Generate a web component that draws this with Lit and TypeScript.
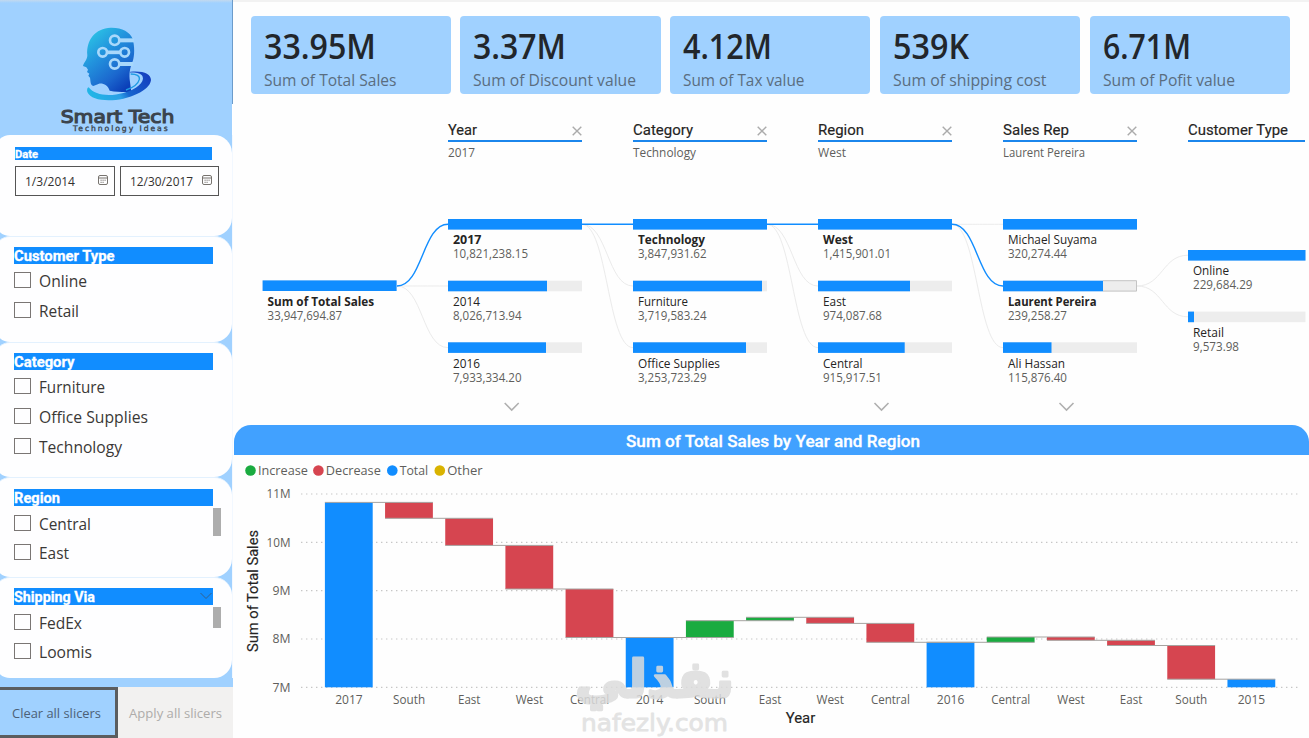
import { LitElement, html, svg, css, nothing } from "lit";
import { customElement } from "lit/decorators.js";

/* Text run with a fixed advance width; the baseline sits 15px below the box top. */
const label = (text: string, width: number, cls: string) => html`
  <svg class="label" width=${width} height="20"><text class=${cls} x="0" y="15" textLength=${width} lengthAdjust="spacingAndGlyphs">${text}</text></svg>`;

const run = (text: string, x: number, y: number, width: number, cls: string) =>
  svg`<text class=${cls} x=${x} y=${y} textLength=${width} lengthAdjust="spacingAndGlyphs">${text}</text>`;

const textStyles = css`
  text { font-family: "Open Sans", "Noto Sans", sans-serif; fill: #252423; }
  .label { display: block; overflow: visible; flex: none; }
  .din { font-family: Roboto, sans-serif; }
`;

@customElement("brand-logo")
class BrandLogo extends LitElement {
  static styles = [textStyles, css`
    :host { display: block; height: 135px; }
    svg { display: block; }
    .name { font-family: "DejaVu Sans", sans-serif; font-weight: 400; font-size: 55px; fill: #3b444d; stroke: #3b444d; stroke-width: 3.5px; }
    .tag { font-family: "DejaVu Sans", sans-serif; font-weight: 400; font-size: 23px; fill: #3b444d; stroke: #3b444d; stroke-width: 1px; }
  `];
  render() {
    return html`<svg width="232" height="135" viewBox="0 0 696 405">
      <defs>
        <linearGradient id="head" x1="0.1" y1="0.05" x2="0.75" y2="1">
          <stop offset="0" stop-color="#2cc8e6"/><stop offset="0.4" stop-color="#2292dd"/>
          <stop offset="0.75" stop-color="#1b67ce"/><stop offset="1" stop-color="#0b3fb8"/>
        </linearGradient>
        <linearGradient id="ring" x1="0" y1="0.6" x2="1" y2="0.3">
          <stop offset="0" stop-color="#22b5e6"/><stop offset="0.4" stop-color="#2a9fe6"/>
          <stop offset="0.55" stop-color="#1765cf"/><stop offset="1" stop-color="#143fbf"/>
        </linearGradient>
      </defs>
      <path fill="url(#head)" d="M332 83C365 82 390 96 398 116C404 140 404 165 398 184C390 204 386 222 390 246L394 276C372 277 350 276 329 272C324 256 310 249 297 251L280 258C270 254 272 242 270 233L265 227L268 221L261 216L264 209L259 202L249 198C250 190 262 180 262 166C258 120 286 85 332 83Z"/>
      <g fill="none" stroke="#a8d8fb" stroke-width="8">
        <circle cx="344" cy="121" r="14"/><path d="M358 121H402" stroke-width="12"/>
        <circle cx="308" cy="157" r="13"/><circle cx="374" cy="157" r="13"/><path d="M321 157H361" stroke-width="11"/>
        <circle cx="344" cy="192" r="14"/><path d="M358 192H400" stroke-width="12"/>
      </g>
      <path fill="url(#ring)" d="M266 262C284 287 330 290 370 279C410 268 434 246 428 230C424 220 408 217 390 218L391 215C430 211 453 222 453 240C450 266 412 286 370 296C325 305 273 302 262 276C260 269 262 262 266 262Z"/>
      <path fill="none" stroke="#1e9be3" stroke-width="4" d="M392 222C410 222 420 228 418 238C414 254 396 264 378 270"/>
      <text class="name" x="182" y="369" textLength="341" lengthAdjust="spacingAndGlyphs">Smart Tech</text>
      <text class="tag" x="219" y="394" textLength="284">Technology Ideas</text>
    </svg>`;
  }
}

type Option = [string, number];

@customElement("slicer-panel")
class SlicerPanel extends LitElement {
  static properties = {
    heading: {}, headingWidth: { type: Number }, options: { attribute: false },
    scroll: { type: Number }, chevron: { type: Boolean }, pitch: { type: Number },
  };
  declare heading: string; declare headingWidth: number; declare options: Option[];
  declare scroll: number; declare chevron: boolean; declare pitch: number;
  static styles = [textStyles, css`
    :host { display: block; box-sizing: border-box; background: #fefeff; border-radius: 15px 18px 18px 15px; margin-left: -5px; padding: 10px 11px 0 19px; border-top: 1px solid #e3f1fe; }
    .strip { width: 199px; height: 17px; background: #118dff; display: flex; justify-content: space-between; }
    .strip .label { margin-top: -1px; }
    .h { font-size: 15px; font-weight: 700; fill: #fff; stroke: #fff; stroke-width: .3px; }
    .chev { margin: 4px 1px 0 0; }
    .body { display: flex; justify-content: space-between; width: 207px; }
    .list { display: flex; flex-direction: column; padding-top: 8px; }
    :host(.tight) .list { padding-top: 9px; }
    :host(.reg) { padding-top: 11px; }
    :host(.reg) .opt .label { margin-top: -.5px; }
    .opt { display: flex; gap: 9px; }
    .box { width: 17px; height: 16px; box-sizing: border-box; border: 1px solid #7a7674; flex: none; }
    .opt .label { margin-left: -1px; }
    .o { font-size: 15.6px; fill: #3a3836; }
    .bar { width: 8px; background: #adadad; margin-top: 2px; }
  `];
  render() {
    return html`
      <div class="strip">${label(this.heading, this.headingWidth, "h din")}
        ${this.chevron ? html`<svg class="chev" width="12" height="8"><path d="M.5 1L6 6.5L11.5 1" fill="none" stroke="#35618c"/></svg>` : nothing}</div>
      <div class="body">
        <div class="list">${this.options.map(([t, w]) => html`
          <div class="opt" style="height:${this.pitch}px"><span class="box"></span>${label(t, w, "o")}</div>`)}</div>
        ${this.scroll ? html`<div class="bar" style="height:${this.scroll}px"></div>` : nothing}
      </div>`;
  }
}

@customElement("date-panel")
class DatePanel extends LitElement {
  static styles = [textStyles, css`
    :host { display: block; box-sizing: border-box; height: 101px; background: #fefeff; border-radius: 15px 18px 18px 15px; margin-left: -5px; padding: 12px 0 0 20px; }
    .strip { display: flex; width: 197px; height: 13px; background: #118dff; }
    .strip .label { margin-top: -4px; }
    .h { font-size: 11px; font-weight: 700; fill: #fff; stroke: #fff; stroke-width: .3px; }
    .fields { display: flex; gap: 5px; margin-top: 6px; }
    .field { box-sizing: border-box; width: 99.5px; height: 30px; border: 1.5px solid #555; display: flex; justify-content: space-between; padding: 4px 5px 0 9px; }
    .d { font-size: 12.3px; fill: #33312f; }
    .cal { margin-top: 4px; margin-right: 1px; }
  `];
  field(t: string, w: number) {
    return html`<div class="field">${label(t, w, "d")}
      <svg class="cal" width="10" height="10" fill="none" stroke="#77736f"><rect x=".5" y=".5" width="9" height="9" rx="1.5"/><path d="M.5 3H9.5"/><path d="M2.5 5.2H8M2.5 7.3H6.5" stroke-dasharray="1.2 .8"/></svg></div>`;
  }
  render() {
    return html`<div class="strip">${label("Date", 23, "h din")}</div>
      <div class="fields">${this.field("1/3/2014", 50)}${this.field("12/30/2017", 63)}</div>`;
  }
}

@customElement("side-bar")
class SideBar extends LitElement {
  static styles = [textStyles, css`
    :host { display: flex; flex-direction: column; width: 233px; height: 738px; background: #a0d1ff; overflow: hidden; flex: none; box-sizing: border-box; }
    .top { background: linear-gradient(#c2d9ef, #a0d1ff 3px); border-right: 1px solid #6c9ccb; height: 104px; }
    .low { height: 31px; border-right: 1px solid #fff; }
    .cards { display: flex; flex-direction: column; border-right: 1px solid #f2f8ff; }
    .type { height: 106px; } .cat { height: 135px; } .reg { height: 100px; } .ship { height: 101px; }
    .foot { display: flex; margin-top: 9px; height: 51px; }
    .btn { display: flex; box-sizing: border-box; }
    .clear { width: 118px; border: 3px solid #5b5d5f; border-left: 0; padding: 13px 0 0 12px; }
    .apply { width: 115px; background: #f2f1f0; padding: 16px 0 0 11px; }
    .c { font-size: 12.5px; fill: #4c6076; } .a { font-size: 12.5px; fill: #aeacaa; }
  `];
  render() {
    return html`
      <div class="top"><brand-logo></brand-logo></div><div class="low"></div>
      <div class="cards">
        <date-panel></date-panel>
        <slicer-panel class="type" heading="Customer Type" headingWidth="100.5" pitch="30" .options=${[["Online", 48], ["Retail", 40]]}></slicer-panel>
        <slicer-panel class="cat" heading="Category" headingWidth="60.5" pitch="30" .options=${[["Furniture", 66], ["Office Supplies", 109], ["Technology", 83]]}></slicer-panel>
        <slicer-panel class="reg tight" heading="Region" headingWidth="46" pitch="29" scroll="28" .options=${[["Central", 52], ["East", 30]]}></slicer-panel>
        <slicer-panel class="ship tight" heading="Shipping Via" headingWidth="81" pitch="29" scroll="21" chevron .options=${[["FedEx", 43], ["Loomis", 53]]}></slicer-panel>
      </div>
      <div class="foot">
        <div class="btn clear">${label("Clear all slicers", 89, "c")}</div>
        <div class="btn apply">${label("Apply all slicers", 93, "a")}</div>
      </div>`;
  }
}

@customElement("kpi-row")
class KpiRow extends LitElement {
  static styles = [textStyles, css`
    :host { display: flex; gap: 9.5px; padding: 14px 0 0 17.5px; }
    .card { width: 200.3px; height: 78px; background: #a0d1ff; border-radius: 4px; box-sizing: border-box; padding: 28px 0 0 13px; flex: none; }
    .v { font-size: 33.5px; font-weight: 600; fill: #22262b; }
    .l { font-size: 15.6px; fill: #5a6d80; }
    .card .label + .label { margin-top: 7px; }
  `];
  render() {
    const items: [string, number, string, number][] = [
      ["33.95M", 112, "Sum of Total Sales", 132.5], ["3.37M", 93, "Sum of Discount value", 163],
      ["4.12M", 89, "Sum of Tax value", 121.5], ["539K", 76, "Sum of shipping cost", 153.5],
      ["6.71M", 88, "Sum of Pofit value", 132],
    ];
    return items.map(([v, vw, l, lw]) => html`<div class="card">${label(v, vw, "v")}${label(l, lw, "l")}</div>`);
  }
}

/* name, name width, value, value width, fill width, state */
type Node = [string, number, string, number, number, number?];

@customElement("decomposition-tree")
class DecompositionTree extends LitElement {
  static styles = [textStyles, css`
    :host { display: block; height: 331px; }
    .heads { display: flex; gap: 51px; padding: 26px 0 0 215px; height: 46px; }
    .head { width: 134px; flex: none; }
    .head.last { width: 117px; }
    .row { display: flex; justify-content: space-between; height: 22px; border-bottom: 2px solid #1b86ec; box-sizing: border-box; }
    .ht { font-size: 14px; font-weight: 400; stroke: #252423; stroke-width: .15px; }
    .hs { font-size: 11.8px; fill: #605e5c; }
    .x { margin: 6px 0 0; }
    .canvas { display: block; }
    .n { font-size: 11.8px; } .b { font-size: 12px; font-weight: 700; } .val { font-size: 12px; fill: #605e5c; }
  `];
  node(x: number, y: number, w: number, n: Node) {
    return svg`<rect x=${x} y=${y} width=${w} height="10.6" fill="#ededed"/>
      <rect x=${x} y=${y} width=${n[4]} height="10.6" fill="#118dff"/>
      ${n[5] === 2 ? svg`<path d="M${x + n[4]} ${y}H${x + w - .5}V${y + 10.4}H${x + n[4]}" fill="none" stroke="#c4c4c4"/>` : nothing}
      ${run(n[0], x + 5, y + 25.2, n[1], n[5] ? "b" : "n")}
      ${run(n[2], x + 5, y + 39.4, n[3], "val")}`;
  }
  link(x1: number, y1: number, x2: number, y2: number, on = false) {
    const m = (x1 + x2) / 2;
    return svg`<path d="M${x1} ${y1}C${m} ${y1} ${m} ${y2} ${x2} ${y2}" fill="none" stroke=${on ? "#118dff" : "#ebebeb"} stroke-width=${on ? 1.4 : 1}/>`;
  }
  render() {
    const heads: [string, number, string, number][] = [
      ["Year", 29, "2017", 27], ["Category", 60, "Technology", 63], ["Region", 46, "West", 28],
      ["Sales Rep", 66, "Laurent Pereira", 82], ["Customer Type", 100, "", 0],
    ];
    const cols: [number, number, number[], Node[]][] = [
      [262.6, 134, [280.4], [["Sum of Total Sales", 106.5, "33,947,694.87", 74.5, 134, 1]]],
      [448, 134, [219, 280.7, 342.3], [["2017", 28.5, "10,821,238.15", 75, 134, 1], ["2014", 27, "8,026,713.94", 68.5, 99, 0], ["2016", 27, "7,933,334.20", 68.5, 98, 0]]],
      [633, 134, [219, 280.7, 342.3], [["Technology", 67, "3,847,931.62", 68.5, 134, 1], ["Furniture", 50, "3,719,583.24", 68.5, 129, 0], ["Office Supplies", 82, "3,253,723.29", 68.5, 113, 0]]],
      [818, 134, [219, 280.7, 342.3], [["West", 30, "1,415,901.01", 68, 134, 1], ["East", 23, "974,087.68", 59, 92, 0], ["Central", 39.5, "915,917.51", 59, 86.7, 0]]],
      [1003, 134, [219, 280.7, 342.3], [["Michael Suyama", 89, "320,274.44", 59, 134, 0], ["Laurent Pereira", 88.5, "239,258.27", 59, 100, 2], ["Ali Hassan", 57, "115,876.40", 59, 48.5, 0]]],
      [1188, 117.5, [250, 311.6], [["Online", 36, "229,684.29", 59.5, 117.5, 0], ["Retail", 31, "9,573.98", 46, 6, 0]]],
    ];
    const Y = [224.3, 286, 347.6];
    return html`
      <div class="heads">${heads.map(([t, w, s, sw], i) => html`
        <div class="head ${i === 4 ? "last" : ""}">
          <div class="row">${label(t, w, "ht din")}${i < 4 ? html`<svg class="x" width="10" height="10"><path d="M.7 .7L9.3 9.3M9.3 .7L.7 9.3" stroke="#ababab" stroke-width="1.4"/></svg>` : nothing}</div>
          ${s ? label(s, sw, "hs") : nothing}
        </div>`)}</div>
      <svg class="canvas" width="1076" height="259" viewBox="233 166 1076 259">
        ${this.link(397, Y[1], 448, Y[1])}${this.link(397, Y[1], 448, Y[2])}
        ${this.link(582, Y[0], 633, Y[1])}${this.link(582, Y[0], 633, Y[2])}
        ${this.link(767, Y[0], 818, Y[1])}${this.link(767, Y[0], 818, Y[2])}
        ${this.link(952, Y[0], 1003, Y[0])}${this.link(952, Y[0], 1003, Y[2])}
        ${this.link(1137, Y[1], 1188, 255.2)}${this.link(1137, Y[1], 1188, 316.8)}
        ${this.link(397, Y[1], 448, Y[0], true)}${this.link(582, Y[0], 633, Y[0], true)}
        ${this.link(767, Y[0], 818, Y[0], true)}${this.link(952, Y[0], 1003, Y[1], true)}
        ${cols.map(([x, w, ys, ns]) => ns.map((n, i) => this.node(x, ys[i], w, n)))}
        ${[511.7, 881.5, 1066.5].map((x) => svg`<path d="M${x - 7} 403L${x} 410L${x + 7} 403" fill="none" stroke="#b0b0b0" stroke-width="1.6"/>`)}
      </svg>`;
  }
}

@customElement("waterfall-chart")
class WaterfallChart extends LitElement {
  static styles = [textStyles, css`
    :host { display: block; }
    .title { height: 30px; margin-left: 1px; background: #41a1ff; border-radius: 17px 17px 0 0; display: flex; justify-content: center; }
    .title .label { margin-top: 7px; margin-left: 2px; }
    .tt { font-size: 16px; font-weight: 500; fill: #fff; stroke: #fff; stroke-width: .3px; }
    .canvas { display: block; }
    .lg { font-size: 12.8px; fill: #605e5c; } .ax { font-size: 12px; fill: #605e5c; }
    .at { font-size: 14px; font-weight: 400; stroke: #252423; stroke-width: .15px; }
    .mark { opacity: .85; }
    .ar { font-family: "DejaVu Sans", sans-serif; font-weight: 700; font-size: 46px; fill: #dcdcdc; stroke: #dcdcdc; stroke-width: 2.6px; stroke-linejoin: round; }
    .la { font-family: "DejaVu Sans", sans-serif; font-size: 22.5px; fill: #dfdfdf; stroke: #dfdfdf; stroke-width: .8px; stroke-linejoin: round; }
  `];
  render() {
    const G = "#1aab40", R = "#d64550", B = "#118dff";
    const bars: [string, number, number, number, string][] = [
      ["2017", 27.5, 502.4, 687.3, B], ["South", 32, 502.4, 518.3, R], ["East", 22.5, 518.3, 545.4, R],
      ["West", 27.5, 545.4, 589, R], ["Central", 39, 589, 637.5, R], ["2014", 27.5, 637.5, 687.3, B],
      ["South", 32, 620.7, 637.5, G], ["East", 22.5, 617.3, 620.7, G], ["West", 27.5, 617.3, 623.4, R],
      ["Central", 39, 623.4, 642.3, R], ["2016", 27.5, 642.3, 687.3, B], ["Central", 39, 637, 642.3, G],
      ["West", 27.5, 637, 640.3, R], ["East", 22.5, 640.3, 645.5, R], ["South", 32, 645.5, 679.2, R], ["2015", 27.5, 679.2, 687.3, B],
    ];
    const joins = [502.4, 518.3, 545.4, 589, 637.5, 637.5, 620.7, 617.3, 623.4, 642.3, 642.3, 637, 640.3, 645.5, 679.2];
    const legend: [number, string, string, number][] = [
      [250.5, G, "Increase", 50], [318.4, R, "Decrease", 55], [392.3, B, "Total", 28.5], [439.8, "#d9b300", "Other", 35.5]];
    const bx = (i: number) => 324.9 + i * 60.17;
    return html`
      <div class="title">${label("Sum of Total Sales by Year and Region", 294, "tt din")}</div>
      <svg class="canvas" width="1076" height="283" viewBox="233 455 1076 283">
        ${legend.map(([x, c, t, w]) => svg`<circle cx=${x} cy="470.5" r="5.3" fill=${c}/>${run(t, x + 7.4, 475.3, w, "lg")}`)}
        ${["11M", "10M", "9M", "8M", "7M"].map((t, i) => svg`
          <path d="M301 ${494 + i * 48.33}H1299" stroke="#c6c6c6" stroke-width="1.2" stroke-dasharray="1.4 3.6"/>
          ${run(t, i < 2 ? 266.5 : 272.5, 498.3 + i * 48.33, i < 2 ? 24 : 18, "ax")}`)}
        ${bars.map(([t, w, y1, y2, c], i) => svg`<rect x=${bx(i)} y=${y1} width="47.8" height=${y2 - y1} fill=${c}/>
          ${run(t, bx(i) + 24 - w / 2, 704, w, "ax")}`)}
        ${joins.map((y, i) => svg`<path d="M${bx(i)} ${y}H${bx(i + 1) + 47.8}" stroke="#a6a3a0" stroke-width="1"/>`)}
        <g transform="translate(258 652) rotate(-90)">${run("Sum of Total Sales", 0, 0, 122, "at din")}</g>
        ${run("Year", 785.7, 723, 29.5, "at din")}
        <g class="mark">
          <g transform="translate(654.5 697) scale(1.13 1.12)"><text class="ar" text-anchor="middle" direction="rtl">نفذلي</text></g>
          ${run("nafezly.com", 581, 731, 147, "la")}
        </g>
      </svg>`;
  }
}

@customElement("app-root")
class AppRoot extends LitElement {
  static styles = css`
    :host { display: flex; width: 1309px; height: 738px; background: #fefefe; overflow: hidden; }
    main { width: 1076px; flex: none; box-sizing: border-box; border-top: 2px solid #f2f2f2; display: flex; flex-direction: column; }
  `;
  render() {
    return html`<side-bar></side-bar>
      <main><kpi-row></kpi-row><decomposition-tree></decomposition-tree><waterfall-chart></waterfall-chart></main>`;
  }
}
